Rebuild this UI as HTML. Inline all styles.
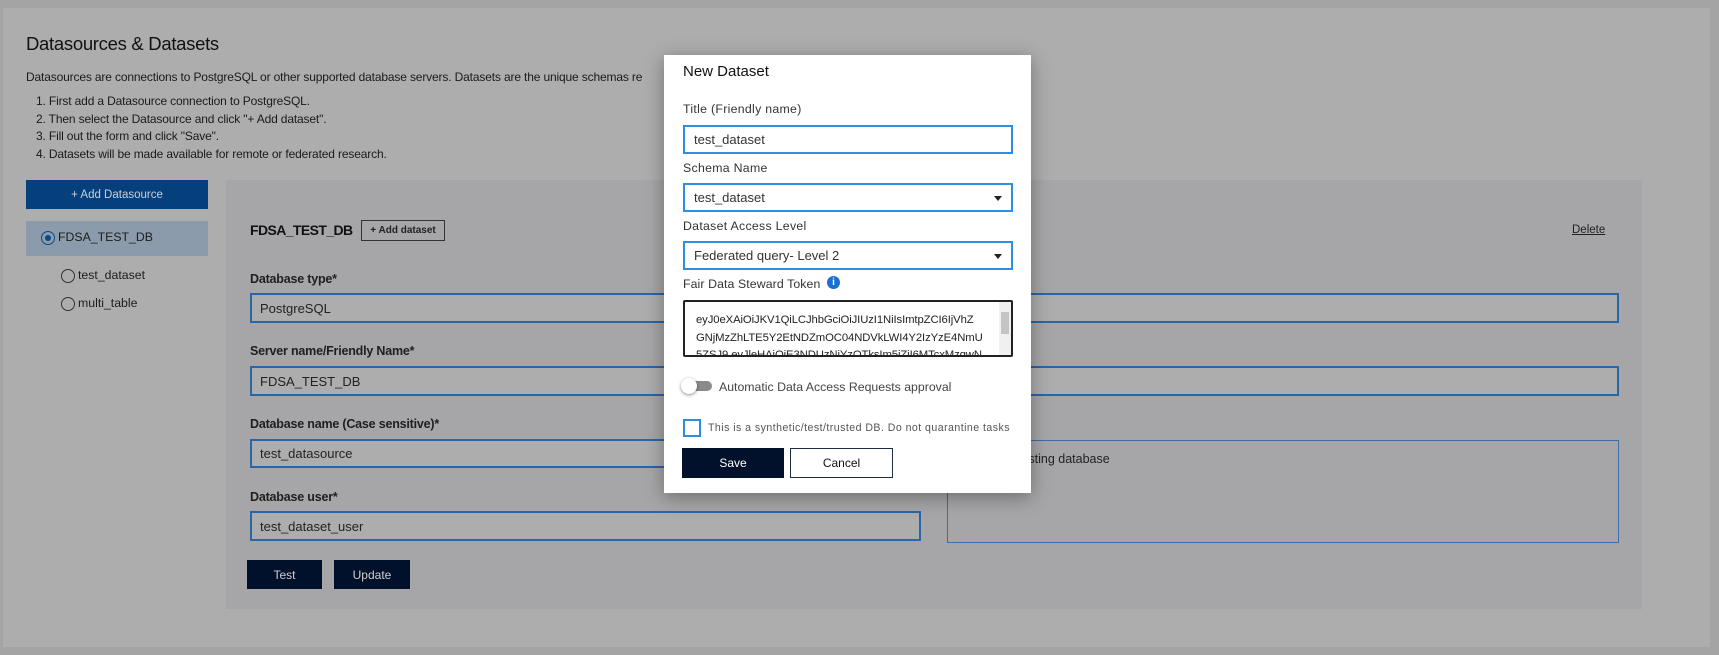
<!DOCTYPE html>
<html><head><meta charset="utf-8"><style>
*{box-sizing:border-box;margin:0;padding:0}
body{width:1719px;height:655px;background:#a4a4a4;font-family:"Liberation Sans",sans-serif;position:relative;overflow:hidden;color:#1c1c1c}
.a{position:absolute}
.page{left:3px;top:8px;width:1707px;height:639px;background:#adadad}
.panel{left:226px;top:180px;width:1416px;height:429px;background:#a6a6a8}
.inp{position:absolute;border:2px solid #2a65a8;background:#adadad;font-size:13px;padding-left:8px;display:flex;align-items:center;color:#222}
.lbl{position:absolute;font-size:12.5px;font-weight:bold;color:#1e1e1e;letter-spacing:-.2px}
.btn{position:absolute;background:#02112b;color:#cfcfcf;font-size:12px;display:flex;align-items:center;justify-content:center}
.radio{position:absolute;width:14px;height:14px;border:1.5px solid #333;border-radius:50%}
.modal{left:664px;top:55px;width:367px;height:438px;background:#fff;box-shadow:0 4px 18px rgba(0,0,0,.35)}
.m .lb{position:absolute;font-size:12.3px;color:#333;letter-spacing:.3px}
.m .in{position:absolute;border:2px solid #2f8de4;font-size:13px;color:#333;padding-left:9px;display:flex;align-items:center;background:#fff}
.caret{position:absolute;right:9px;top:11px;width:0;height:0;border-left:4px solid transparent;border-right:4px solid transparent;border-top:5px solid #222}
</style></head><body>
<div class="a page"></div>
<div class="a" style="left:26px;top:33px;font-size:18.5px;color:#111;letter-spacing:-.3px">Datasources &amp; Datasets</div>
<div class="a" style="left:26px;top:70px;font-size:12px;color:#1a1a1a;white-space:nowrap;letter-spacing:-.15px">Datasources are connections to PostgreSQL or other supported database servers. Datasets are the unique schemas re</div>
<div class="a" style="left:36px;top:93px;font-size:12px;line-height:17.5px;color:#1a1a1a;letter-spacing:-.15px">1. First add a Datasource connection to PostgreSQL.<br>2. Then select the Datasource and click "+ Add dataset".<br>3. Fill out the form and click "Save".<br>4. Datasets will be made available for remote or federated research.</div>
<div class="a" style="left:26px;top:180px;width:182px;height:29px;background:#053f7c;color:#c9d0da;font-size:11.5px;display:flex;align-items:center;justify-content:center">+ Add Datasource</div>
<div class="a" style="left:26px;top:221px;width:182px;height:35px;background:#8b9bac"></div>
<div class="radio" style="left:41px;top:231px;border-color:#0a4a8a"><div style="position:absolute;left:2.5px;top:2.5px;width:6px;height:6px;border-radius:50%;background:#0a4a8a"></div></div>
<div class="a" style="left:58px;top:230px;font-size:12.3px">FDSA_TEST_DB</div>
<div class="radio" style="left:61px;top:269px"></div>
<div class="a" style="left:78px;top:268px;font-size:12.3px">test_dataset</div>
<div class="radio" style="left:61px;top:297px"></div>
<div class="a" style="left:78px;top:296px;font-size:12.3px">multi_table</div>

<div class="a panel"></div>
<div class="a" style="left:250px;top:222px;font-size:14px;font-weight:bold;color:#111;letter-spacing:-.6px">FDSA_TEST_DB</div>
<div class="a" style="left:361px;top:220px;width:84px;height:21px;border:1.5px solid #333;font-size:10px;font-weight:bold;display:flex;align-items:center;justify-content:center;color:#222">+ Add dataset</div>
<div class="a" style="left:1572px;top:224px;font-size:11.5px;text-decoration:underline;color:#222">Delete</div>
<div class="lbl" style="left:250px;top:272px">Database type*</div>
<div class="inp" style="left:250px;top:293px;width:1369px;height:30px">PostgreSQL</div>
<div class="lbl" style="left:250px;top:344px">Server name/Friendly Name*</div>
<div class="inp" style="left:250px;top:366px;width:1369px;height:30px">FDSA_TEST_DB</div>
<div class="lbl" style="left:250px;top:417px">Database name (Case sensitive)*</div>
<div class="inp" style="left:250px;top:439px;width:671px;height:29px">test_datasource</div>
<div class="a" style="left:947px;top:440px;width:672px;height:103px;border:1.5px solid #3d6ea6"></div>
<div class="a" style="left:1011px;top:452px;font-size:12.5px;color:#222">Existing database</div>
<div class="lbl" style="left:250px;top:490px">Database user*</div>
<div class="inp" style="left:250px;top:511px;width:671px;height:30px">test_dataset_user</div>
<div class="btn" style="left:247px;top:560px;width:75px;height:29px">Test</div>
<div class="btn" style="left:334px;top:560px;width:76px;height:29px">Update</div>

<div class="a modal m">
 <div class="a" style="left:19px;top:8px;font-size:15px;color:#111">New Dataset</div>
 <div class="lb" style="left:19px;top:47px">Title (Friendly name)</div>
 <div class="in" style="left:19px;top:70px;width:330px;height:29px">test_dataset</div>
 <div class="lb" style="left:19px;top:106px">Schema Name</div>
 <div class="in" style="left:19px;top:128px;width:330px;height:29px">test_dataset<div class="caret"></div></div>
 <div class="lb" style="left:19px;top:164px">Dataset Access Level</div>
 <div class="in" style="left:19px;top:186px;width:330px;height:29px">Federated query- Level 2<div class="caret"></div></div>
 <div class="lb" style="left:19px;top:222px;letter-spacing:.1px">Fair Data Steward Token</div>
 <div class="a" style="left:163px;top:221px;width:13px;height:13px;border-radius:50%;background:#1a6fd0;color:#fff;font-size:10px;font-weight:bold;text-align:center;line-height:13px">i</div>
 <div class="a" style="left:19px;top:245px;width:330px;height:57px;border:2px solid #222;border-radius:2px;overflow:hidden">
  <div style="position:absolute;left:11px;top:10px;width:310px;font-size:11.3px;line-height:17.5px;color:#222;white-space:nowrap;letter-spacing:-.1px">eyJ0eXAiOiJKV1QiLCJhbGciOiJIUzI1NiIsImtpZCI6IjVhZ<br>GNjMzZhLTE5Y2EtNDZmOC04NDVkLWI4Y2IzYzE4NmU<br>5ZSJ9.eyJleHAiOjE3NDUzNjYzOTksIm5iZiI6MTcxMzgwN</div>
  <div style="position:absolute;right:0;top:0;width:12px;height:100%;background:#f0f0f0"><div style="margin:10px 2px;height:22px;background:#c4c4c4"></div></div>
 </div>
 <div class="a" style="left:22px;top:326px;width:26px;height:10px;border-radius:5px;background:#8a8a8a"></div>
 <div class="a" style="left:17px;top:323px;width:16px;height:16px;border-radius:50%;background:#fff;box-shadow:0 1px 3px rgba(0,0,0,.45)"></div>
 <div class="a" style="left:55px;top:325px;font-size:12.3px;color:#444">Automatic Data Access Requests approval</div>
 <div class="a" style="left:19px;top:364px;width:18px;height:18px;border:2px solid #2f8de4"></div>
 <div class="a" style="left:44px;top:367px;font-size:10.6px;color:#555;letter-spacing:.45px;white-space:nowrap">This is a synthetic/test/trusted DB. Do not quarantine tasks</div>
 <div class="btn" style="left:18px;top:393px;width:102px;height:30px;color:#fff;font-size:12px">Save</div>
 <div class="a" style="left:126px;top:393px;width:103px;height:30px;border:1.5px solid #1e2d44;font-size:12px;display:flex;align-items:center;justify-content:center;color:#111">Cancel</div>
</div>
</body></html>
